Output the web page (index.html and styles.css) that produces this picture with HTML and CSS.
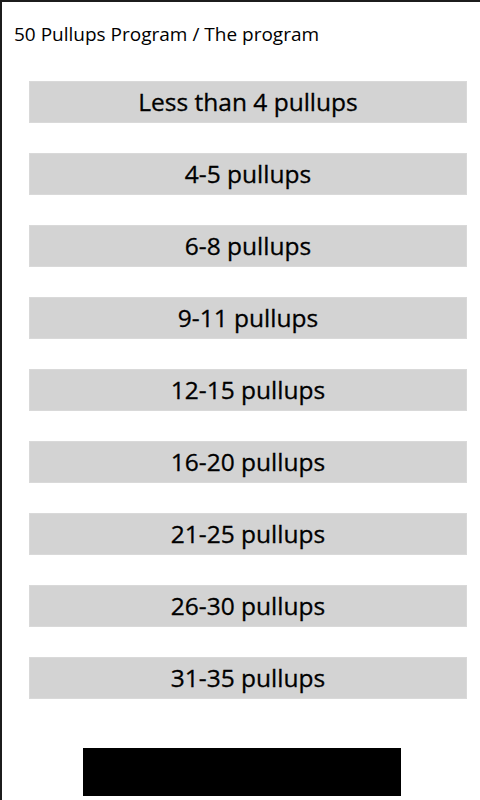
FILE: index.html
```html
<!DOCTYPE html>
<html lang="en">
<head>
  <meta charset="UTF-8">
  <meta name="viewport" content="width=device-width, initial-scale=1.0">
  <title>The program</title>
  <link rel="stylesheet" href="styles.css">
</head>
<body>
  <div class="page">
    <div class="header">50 Pullups Program / The program</div>

    <div class="levels">
      <button class="level">Less than 4 pullups</button>
      <button class="level">4-5 pullups</button>
      <button class="level">6-8 pullups</button>
      <button class="level">9-11 pullups</button>
      <button class="level">12-15 pullups</button>
      <button class="level">16-20 pullups</button>
      <button class="level">21-25 pullups</button>
      <button class="level">26-30 pullups</button>
      <button class="level">31-35 pullups</button>
    </div>

    <div class="ad"></div>
  </div>
</body>
</html>
```

FILE: styles.css
```css
body {
  margin: 0;
  font-family: "Open Sans", "Noto Sans", sans-serif;
  color: #000;
  background: #fff;
}
.page {
  width: 478px;
  height: 798px;
  border-top: 2px solid #1c1c1c;
  border-left: 2px solid #1c1c1c;
  overflow: hidden;
}
.header {
  padding: 18px 0 0 12px;
  height: 79px;
  box-sizing: border-box;
  font-size: 19px;
  line-height: 28px;
}
.levels {
  display: flex;
  flex-direction: column;
  gap: 30px;
  padding-left: 27px;
}
.level {
  width: 438px;
  height: 42px;
  margin: 0;
  padding: 0 0 2px;
  border: 1px solid #d9d9d9;
  background: #d3d3d3;
  font-family: inherit;
  font-size: 24.5px;
  color: #000;
  text-align: center;
  -webkit-text-stroke: 0.3px #000;
  cursor: pointer;
}
.ad {
  width: 318px;
  height: 48px;
  margin: 49px 0 0 81px;
  background: #000;
}
```
